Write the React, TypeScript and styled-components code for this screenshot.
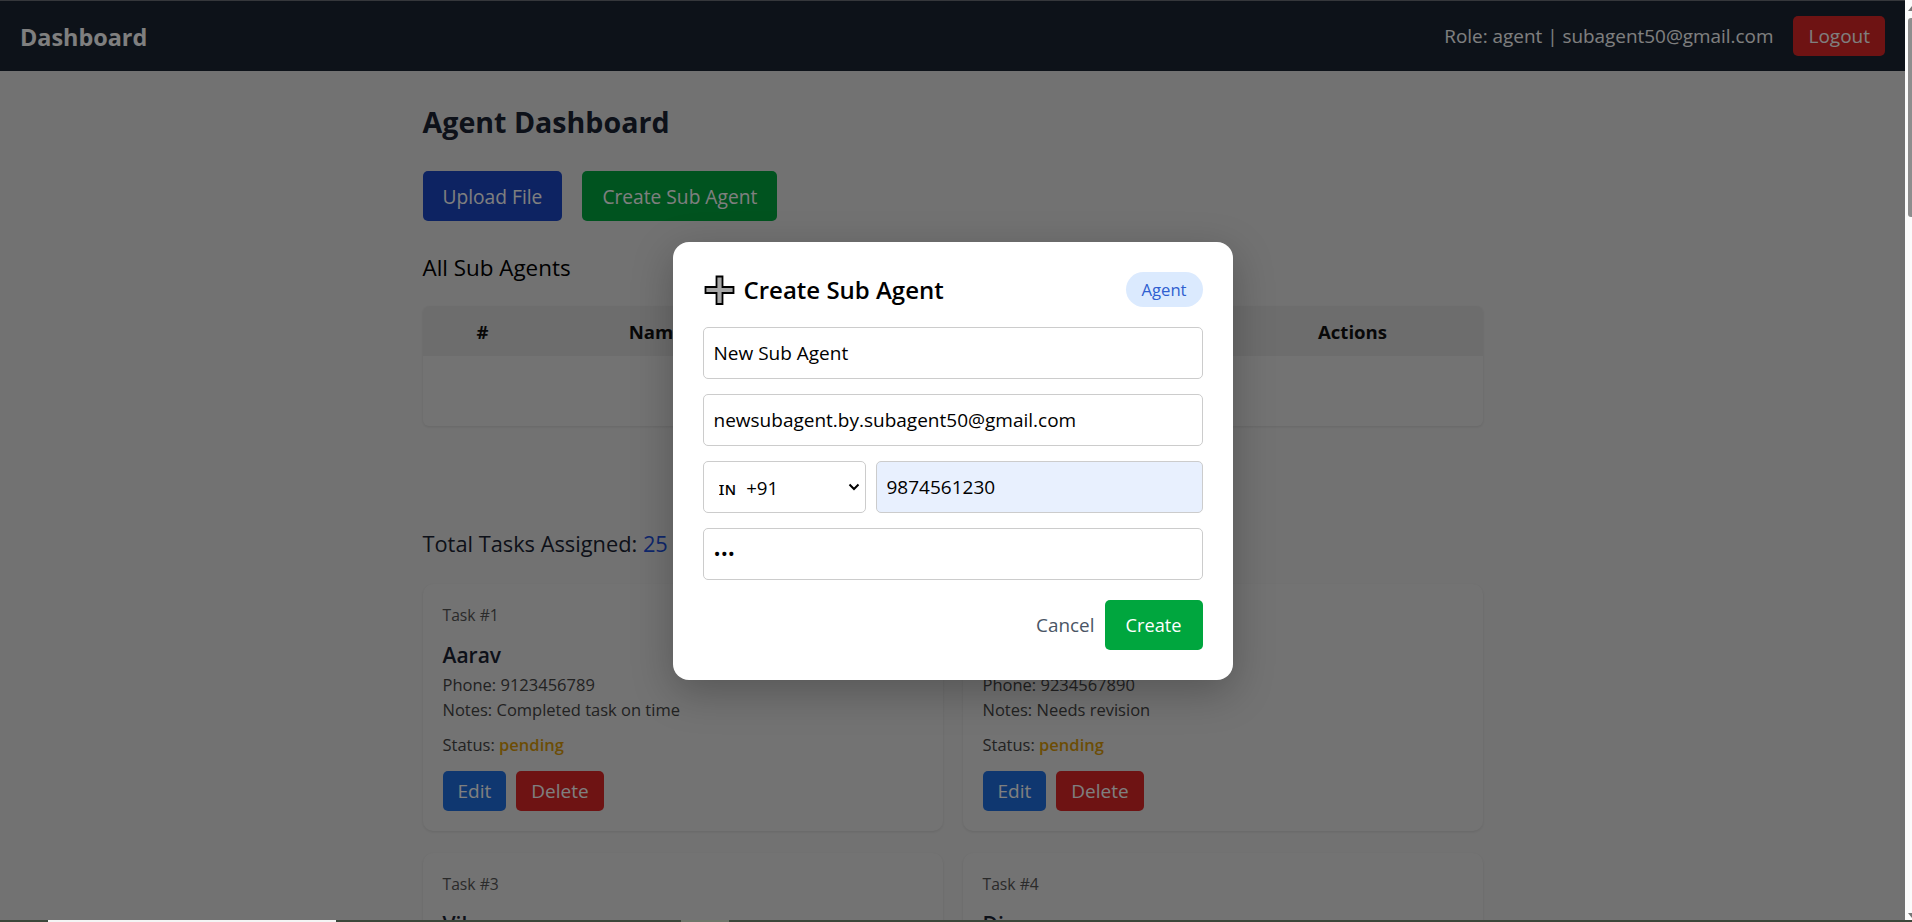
import React from 'react';
import styled, { createGlobalStyle } from 'styled-components';

const GlobalStyle = createGlobalStyle`
  html, body {
    margin: 0;
    padding: 0;
    height: 100%;
    overflow: hidden;
  }
  body {
    font-family: "Open Sans", "Noto Sans", "Liberation Sans", sans-serif;
    background: #e5e5e5;
    color: #1a2332;
  }
  * { box-sizing: border-box; }
`;

const Shell = styled.div`
  position: relative;
  display: flex;
  height: 100vh;
  overflow: hidden;
`;

const Main = styled.div`
  position: relative;
  flex: 1;
  min-width: 0;
  overflow: hidden;
`;

const NavBar = styled.header`
  display: flex;
  align-items: center;
  justify-content: space-between;
  height: 71px;
  padding: 0 20px;
  background: #1a2433;
  border-top: 1px solid #6b6f76;
  color: #fff;
`;

const Brand = styled.div`
  margin-top: 2px;
  font-size: 23.4px;
  font-weight: 700;
`;

const NavRight = styled.div`
  display: flex;
  align-items: center;
  gap: 20px;
  font-size: 18.9px;
`;

const Button = styled.button<{ $color: string; $small?: boolean }>`
  height: ${({ $small }) => ($small ? '40px' : '50px')};
  padding: 0 ${({ $small }) => ($small ? '15px' : '20px')};
  border: none;
  border-radius: 5px;
  background: ${({ $color }) => $color};
  color: #fff;
  font: inherit;
  font-size: ${({ $small }) => ($small ? '19px' : '19.2px')};
`;

const Container = styled.main`
  width: 1060px;
  margin: 0 auto;
  padding-top: 30px;
`;

const PageTitle = styled.h1`
  margin: 0 0 29px;
  font-size: 28.6px;
  line-height: 41px;
  font-weight: 700;
`;

const ActionRow = styled.div`
  display: flex;
  gap: 20px;
  margin-bottom: 32px;
`;

const SectionTitle = styled.h2`
  margin: 0 0 23px;
  font-size: 22.4px;
  line-height: 30px;
  font-weight: 500;
  color: #000;
`;

const Table = styled.table`
  width: 100%;
  table-layout: fixed;
  border-collapse: separate;
  border-spacing: 0;
  border-radius: 6px;
  overflow: hidden;
  background: #e6e6e6;
  box-shadow: 0 1px 3px rgba(0, 0, 0, 0.1);
  margin-bottom: 103px;
`;

const Th = styled.th`
  height: 50px;
  padding: 0;
  background: #dbdbdb;
  font-size: 18.6px;
  font-weight: 700;
  color: #111;
  text-align: center;
`;

const EmptyCell = styled.td`
  height: 70px;
`;

const TotalLine = styled.h2`
  margin: 0 0 25px;
  font-size: 21.8px;
  line-height: 30px;
  font-weight: 500;
`;

const TotalCount = styled.span`
  color: #1d4ed8;
`;

const CardGrid = styled.div`
  display: grid;
  grid-template-columns: 1fr 1fr;
  gap: 22px 20px;
`;

const Card = styled.article`
  height: 247px;
  padding: 20px;
  border-radius: 10px;
  background: #e6e6e6;
  box-shadow: 0 1px 3px rgba(0, 0, 0, 0.1);
`;

const TaskNo = styled.div`
  font-size: 15.7px;
  line-height: 22px;
  color: #555;
`;

const CardName = styled.h3`
  margin: 14px 0 2px;
  min-height: 30px;
  font-size: 21px;
  line-height: 30px;
  font-weight: 600;
`;

const Detail = styled.p`
  margin: 0;
  font-size: 16.5px;
  line-height: 25px;
  color: #444;
`;

const StatusLine = styled(Detail)`
  margin-top: 10px;
`;

const Pending = styled.span`
  color: #d99a0b;
  font-weight: 600;
`;

const CardActions = styled.div`
  display: flex;
  gap: 10px;
  margin-top: 14px;
`;

const Overlay = styled.div`
  position: absolute;
  inset: 0;
  display: flex;
  align-items: center;
  justify-content: center;
  background: rgba(0, 0, 0, 0.5);
`;

const Modal = styled.form`
  display: flex;
  flex-direction: column;
  gap: 15px;
  width: 560px;
  padding: 30px;
  border-radius: 16px;
  background: #fff;
  box-shadow: 0 12px 40px rgba(0, 0, 0, 0.25);
`;

const ModalHead = styled.div`
  display: flex;
  align-items: center;
  justify-content: space-between;
  margin-bottom: 5px;
`;

const ModalTitle = styled.h2`
  display: flex;
  align-items: center;
  gap: 8px;
  margin: 0 0 0 1px;
  font-size: 24px;
  line-height: 35px;
  font-weight: 600;
  color: #000;
`;

const PlusIcon = styled.svg`
  width: 32px;
  height: 32px;
  flex: none;
`;

const Badge = styled.span`
  display: flex;
  align-items: center;
  justify-content: center;
  width: 77px;
  height: 35px;
  border-radius: 18px;
  background: #dbeafe;
  color: #2f5fd0;
  font-size: 16.7px;
`;

const Input = styled.input<{ $filled?: boolean }>`
  display: block;
  width: 100%;
  min-width: 0;
  height: 52px;
  padding: 0 10px;
  border: 1px solid #ccc;
  border-radius: 5px;
  outline: none;
  background: ${({ $filled }) => ($filled ? '#e8f0fe' : '#fff')};
  color: #000;
  font: inherit;
  font-size: 19px;
`;

const PhoneRow = styled.div`
  display: flex;
  gap: 10px;
`;

const SelectWrap = styled.div`
  position: relative;
  flex: none;
  width: 163px;
`;

const CodeSelect = styled.select`
  appearance: none;
  display: block;
  width: 100%;
  height: 52px;
  padding: 0 24px 0 15px;
  border: 1px solid #ccc;
  border-radius: 5px;
  background: #fff;
  color: #000;
  font: inherit;
  font-size: 18.7px;
  word-spacing: 5px;
`;

const SelectChevron = styled.svg`
  position: absolute;
  top: 22px;
  right: 6px;
  width: 12px;
  height: 8px;
  pointer-events: none;
`;

const ModalFoot = styled.div`
  display: flex;
  align-items: center;
  justify-content: flex-end;
  gap: 10px;
  margin-top: 5px;
`;

const CancelButton = styled.button`
  padding: 0;
  border: none;
  background: none;
  color: #4a5565;
  font: inherit;
  font-size: 18.9px;
`;

const CreateButton = styled(Button)`
  width: 98px;
  padding: 0;
  font-size: 18.2px;
  font-weight: 500;
`;

const ScrollRail = styled.div`
  display: flex;
  flex-direction: column;
  align-items: flex-end;
  flex: none;
  width: 7px;
  padding-top: 3px;
  background: #fbfbfb;
`;

const Arrow = styled.svg`
  width: 7px;
  height: 12px;
  flex: none;
`;

const ScrollThumb = styled.div`
  width: 4px;
  height: 199px;
  margin-top: 3px;
  border-radius: 3px 0 0 3px;
  background: #8d8d8d;
`;

const RailGap = styled.div`
  flex: 1;
`;

const TaskbarEdge = styled.div`
  position: absolute;
  left: 0;
  right: 0;
  bottom: 0;
  display: flex;
  height: 2px;
  background: #3b473a;
`;

const EdgePiece = styled.div<{ $left: number; $width: number; $color: string }>`
  width: ${({ $width }) => $width}px;
  margin-left: ${({ $left }) => $left}px;
  background: ${({ $color }) => $color};
`;

const tasks = [
  { id: 1, name: 'Aarav', phone: '9123456789', notes: 'Completed task on time' },
  { id: 2, name: '', phone: '9234567890', notes: 'Needs revision' },
  { id: 3, name: 'Vikram', phone: '', notes: '' },
  { id: 4, name: 'Diya', phone: '', notes: '' },
];

export default function App() {
  return (
    <Shell>
      <GlobalStyle />
      <Main>
        <NavBar>
          <Brand>Dashboard</Brand>
          <NavRight>
            <span>Role: agent | subagent50@gmail.com</span>
            <Button $small $color="#dc2626">Logout</Button>
          </NavRight>
        </NavBar>
        <Container>
          <PageTitle>Agent Dashboard</PageTitle>
          <ActionRow>
            <Button $color="#1a46c4">Upload File</Button>
            <Button $color="#00a63e">Create Sub Agent</Button>
          </ActionRow>
          <SectionTitle>All Sub Agents</SectionTitle>
          <Table>
            <colgroup>
              <col width="120" />
              <col width="228" />
              <col width="452" />
              <col width="260" />
            </colgroup>
            <thead>
              <tr>
                <Th>#</Th>
                <Th>Name</Th>
                <Th />
                <Th>Actions</Th>
              </tr>
            </thead>
            <tbody>
              <tr>
                <EmptyCell colSpan={4} />
              </tr>
            </tbody>
          </Table>
          <TotalLine>
            Total Tasks Assigned: <TotalCount>25</TotalCount>
          </TotalLine>
          <CardGrid>
            {tasks.map((task) => (
              <Card key={task.id}>
                <TaskNo>Task #{task.id}</TaskNo>
                <CardName>{task.name}</CardName>
                {task.phone && (
                  <>
                    <Detail>Phone: {task.phone}</Detail>
                    <Detail>Notes: {task.notes}</Detail>
                    <StatusLine>
                      Status: <Pending>pending</Pending>
                    </StatusLine>
                    <CardActions>
                      <Button $small $color="#1f6fe0">Edit</Button>
                      <Button $small $color="#dc2626">Delete</Button>
                    </CardActions>
                  </>
                )}
              </Card>
            ))}
          </CardGrid>
        </Container>
        <Overlay>
          <Modal onSubmit={(e) => e.preventDefault()}>
            <ModalHead>
              <ModalTitle>
                <PlusIcon viewBox="0 0 32 32">
                  <path
                    d="M12.5 2.5h6v10.5h11v6h-11v11h-6v-11h-11v-6h11z"
                    fill="#a6a6a6"
                    stroke="#000"
                    strokeWidth="1.8"
                  />
                </PlusIcon>
                Create Sub Agent
              </ModalTitle>
              <Badge>Agent</Badge>
            </ModalHead>
            <Input defaultValue="New Sub Agent" />
            <Input defaultValue="newsubagent.by.subagent50@gmail.com" />
            <PhoneRow>
              <SelectWrap>
                <CodeSelect defaultValue="+91">
                  <option value="+91">ɪɴ +91</option>
                </CodeSelect>
                <SelectChevron viewBox="0 0 12 8">
                  <path d="M1.5 1.5L6 6l4.5-4.5" fill="none" stroke="#000" strokeWidth="2" />
                </SelectChevron>
              </SelectWrap>
              <Input $filled defaultValue="9874561230" />
            </PhoneRow>
            <Input type="password" defaultValue="123" />
            <ModalFoot>
              <CancelButton type="button">Cancel</CancelButton>
              <CreateButton $color="#00a63e">Create</CreateButton>
            </ModalFoot>
          </Modal>
        </Overlay>
      </Main>
      <ScrollRail>
        <Arrow viewBox="0 0 7 12">
          <path d="M3 8l4-5v5z" fill="#777" />
        </Arrow>
        <ScrollThumb />
        <RailGap />
        <Arrow viewBox="0 0 7 12">
          <path d="M3 3l4 5V3z" fill="#777" />
        </Arrow>
      </ScrollRail>
      <TaskbarEdge>
        <EdgePiece $left={48} $width={288} $color="#f4f4f4" />
        <EdgePiece $left={345} $width={48} $color="#6f776b" />
      </TaskbarEdge>
    </Shell>
  );
}
